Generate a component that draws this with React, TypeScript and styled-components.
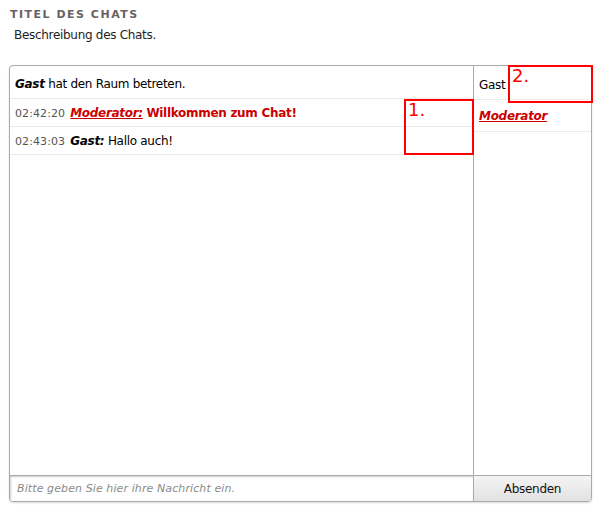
import React from "react";
import styled, { createGlobalStyle } from "styled-components";

const Global = createGlobalStyle`
  html, body { margin: 0; padding: 0; background: #fff; }
  body { font-family: "DejaVu Sans", Verdana, sans-serif; color: #000; }
  * { box-sizing: border-box; }
`;

const Page = styled.div`
  position: relative;
  width: 602px;
  height: 507px;
  padding: 8px 10px 0 9px;
`;

const Title = styled.h2`
  margin: 0 0 0 1px;
  font-size: 11px;
  line-height: 14px;
  font-weight: bold;
  letter-spacing: 1.5px;
  text-transform: uppercase;
  color: #6a6262;
`;

const Description = styled.p`
  margin: 6px 0 0 5px;
  font-size: 12px;
  line-height: 15px;
  letter-spacing: -0.3px;
  color: #222;
`;

const ChatBox = styled.div`
  margin-top: 22px;
  width: 583px;
  height: 437px;
  border: 1px solid #aaa;
  border-radius: 4px;
  box-shadow: 0 1px 2px rgba(0, 0, 0, 0.15);
  display: grid;
  grid-template-columns: 1fr 117px;
  grid-template-rows: 1fr 26px;
  overflow: hidden;
`;

const Messages = styled.div`
  border-right: 1px solid #aaa;
  display: flex;
  flex-direction: column;
`;

const MessageRow = styled.div<{ $tall?: boolean }>`
  height: ${(p) => (p.$tall ? "33px" : "28px")};
  padding: ${(p) => (p.$tall ? "11px 0 0 5px" : "7px 0 0 5px")};
  border-bottom: 1px solid #ebebeb;
  font-size: 12px;
  line-height: 15px;
  letter-spacing: -0.3px;
  white-space: nowrap;
`;

const Time = styled.span`
  font-size: 11px;
  letter-spacing: 0.1px;
  color: #555;
  margin-right: 5px;
`;

const Name = styled.span<{ $mod?: boolean }>`
  font-weight: bold;
  font-style: italic;
  color: ${(p) => (p.$mod ? "#cc0000" : "#000")};
  text-decoration: ${(p) => (p.$mod ? "underline" : "none")};
`;

const Text = styled.span<{ $mod?: boolean }>`
  font-weight: ${(p) => (p.$mod ? "bold" : "normal")};
  color: ${(p) => (p.$mod ? "#cc0000" : "#000")};
`;

const Users = styled.div`
  display: flex;
  flex-direction: column;
`;

const UserRow = styled.div<{ $tall?: boolean }>`
  height: ${(p) => (p.$tall ? "32px" : "34px")};
  padding: ${(p) => (p.$tall ? "9px 0 0 5px" : "12px 0 0 5px")};
  border-bottom: 1px solid #ebebeb;
  font-size: 12px;
  line-height: 15px;
  letter-spacing: -0.3px;
`;

const InputCell = styled.div`
  border-top: 1px solid #aaa;
  border-right: 1px solid #aaa;
  display: flex;
`;

const Input = styled.input`
  flex: 1;
  border: none;
  margin: 0;
  padding: 0 0 0 7px;
  font-family: "DejaVu Sans", Verdana, sans-serif;
  font-size: 11px;
  letter-spacing: 0.1px;
  background: #fff;
  box-shadow: inset 1px 1px 2px rgba(0, 0, 0, 0.2);
  outline: none;
  &::placeholder {
    color: #8a8a8a;
    font-style: italic;
  }
`;

const SendButton = styled.button`
  border: none;
  border-top: 1px solid #aaa;
  margin: 0;
  padding: 0;
  font-family: "DejaVu Sans", Verdana, sans-serif;
  font-size: 12px;
  letter-spacing: -0.3px;
  color: #111;
  background: linear-gradient(#f4f4f4, #e2e2e2);
  cursor: pointer;
`;

const Marker = styled.div`
  position: absolute;
  border: 2px solid #ff0000;
  color: #ff0000;
  font-family: "DejaVu Sans", Verdana, sans-serif;
  font-size: 18px;
  line-height: 18px;
  padding: 0 0 0 2px;
`;

export default function App() {
  return (
    <>
      <Global />
      <Page>
        <Title>Titel des Chats</Title>
        <Description>Beschreibung des Chats.</Description>
        <ChatBox>
          <Messages>
            <MessageRow $tall>
              <Name>Gast</Name> <Text>hat den Raum betreten.</Text>
            </MessageRow>
            <MessageRow>
              <Time>02:42:20</Time>
              <Name $mod>Moderator:</Name> <Text $mod>Willkommen zum Chat!</Text>
            </MessageRow>
            <MessageRow>
              <Time>02:43:03</Time>
              <Name>Gast:</Name> <Text>Hallo auch!</Text>
            </MessageRow>
          </Messages>
          <Users>
            <UserRow>Gast</UserRow>
            <UserRow $tall>
              <Name $mod>Moderator</Name>
            </UserRow>
          </Users>
          <InputCell>
            <Input placeholder="Bitte geben Sie hier ihre Nachricht ein." />
          </InputCell>
          <SendButton>Absenden</SendButton>
        </ChatBox>
        <Marker style={{ left: 404, top: 99, width: 70, height: 56 }}>1.</Marker>
        <Marker style={{ left: 508, top: 65, width: 85, height: 38 }}>2.</Marker>
      </Page>
    </>
  );
}
